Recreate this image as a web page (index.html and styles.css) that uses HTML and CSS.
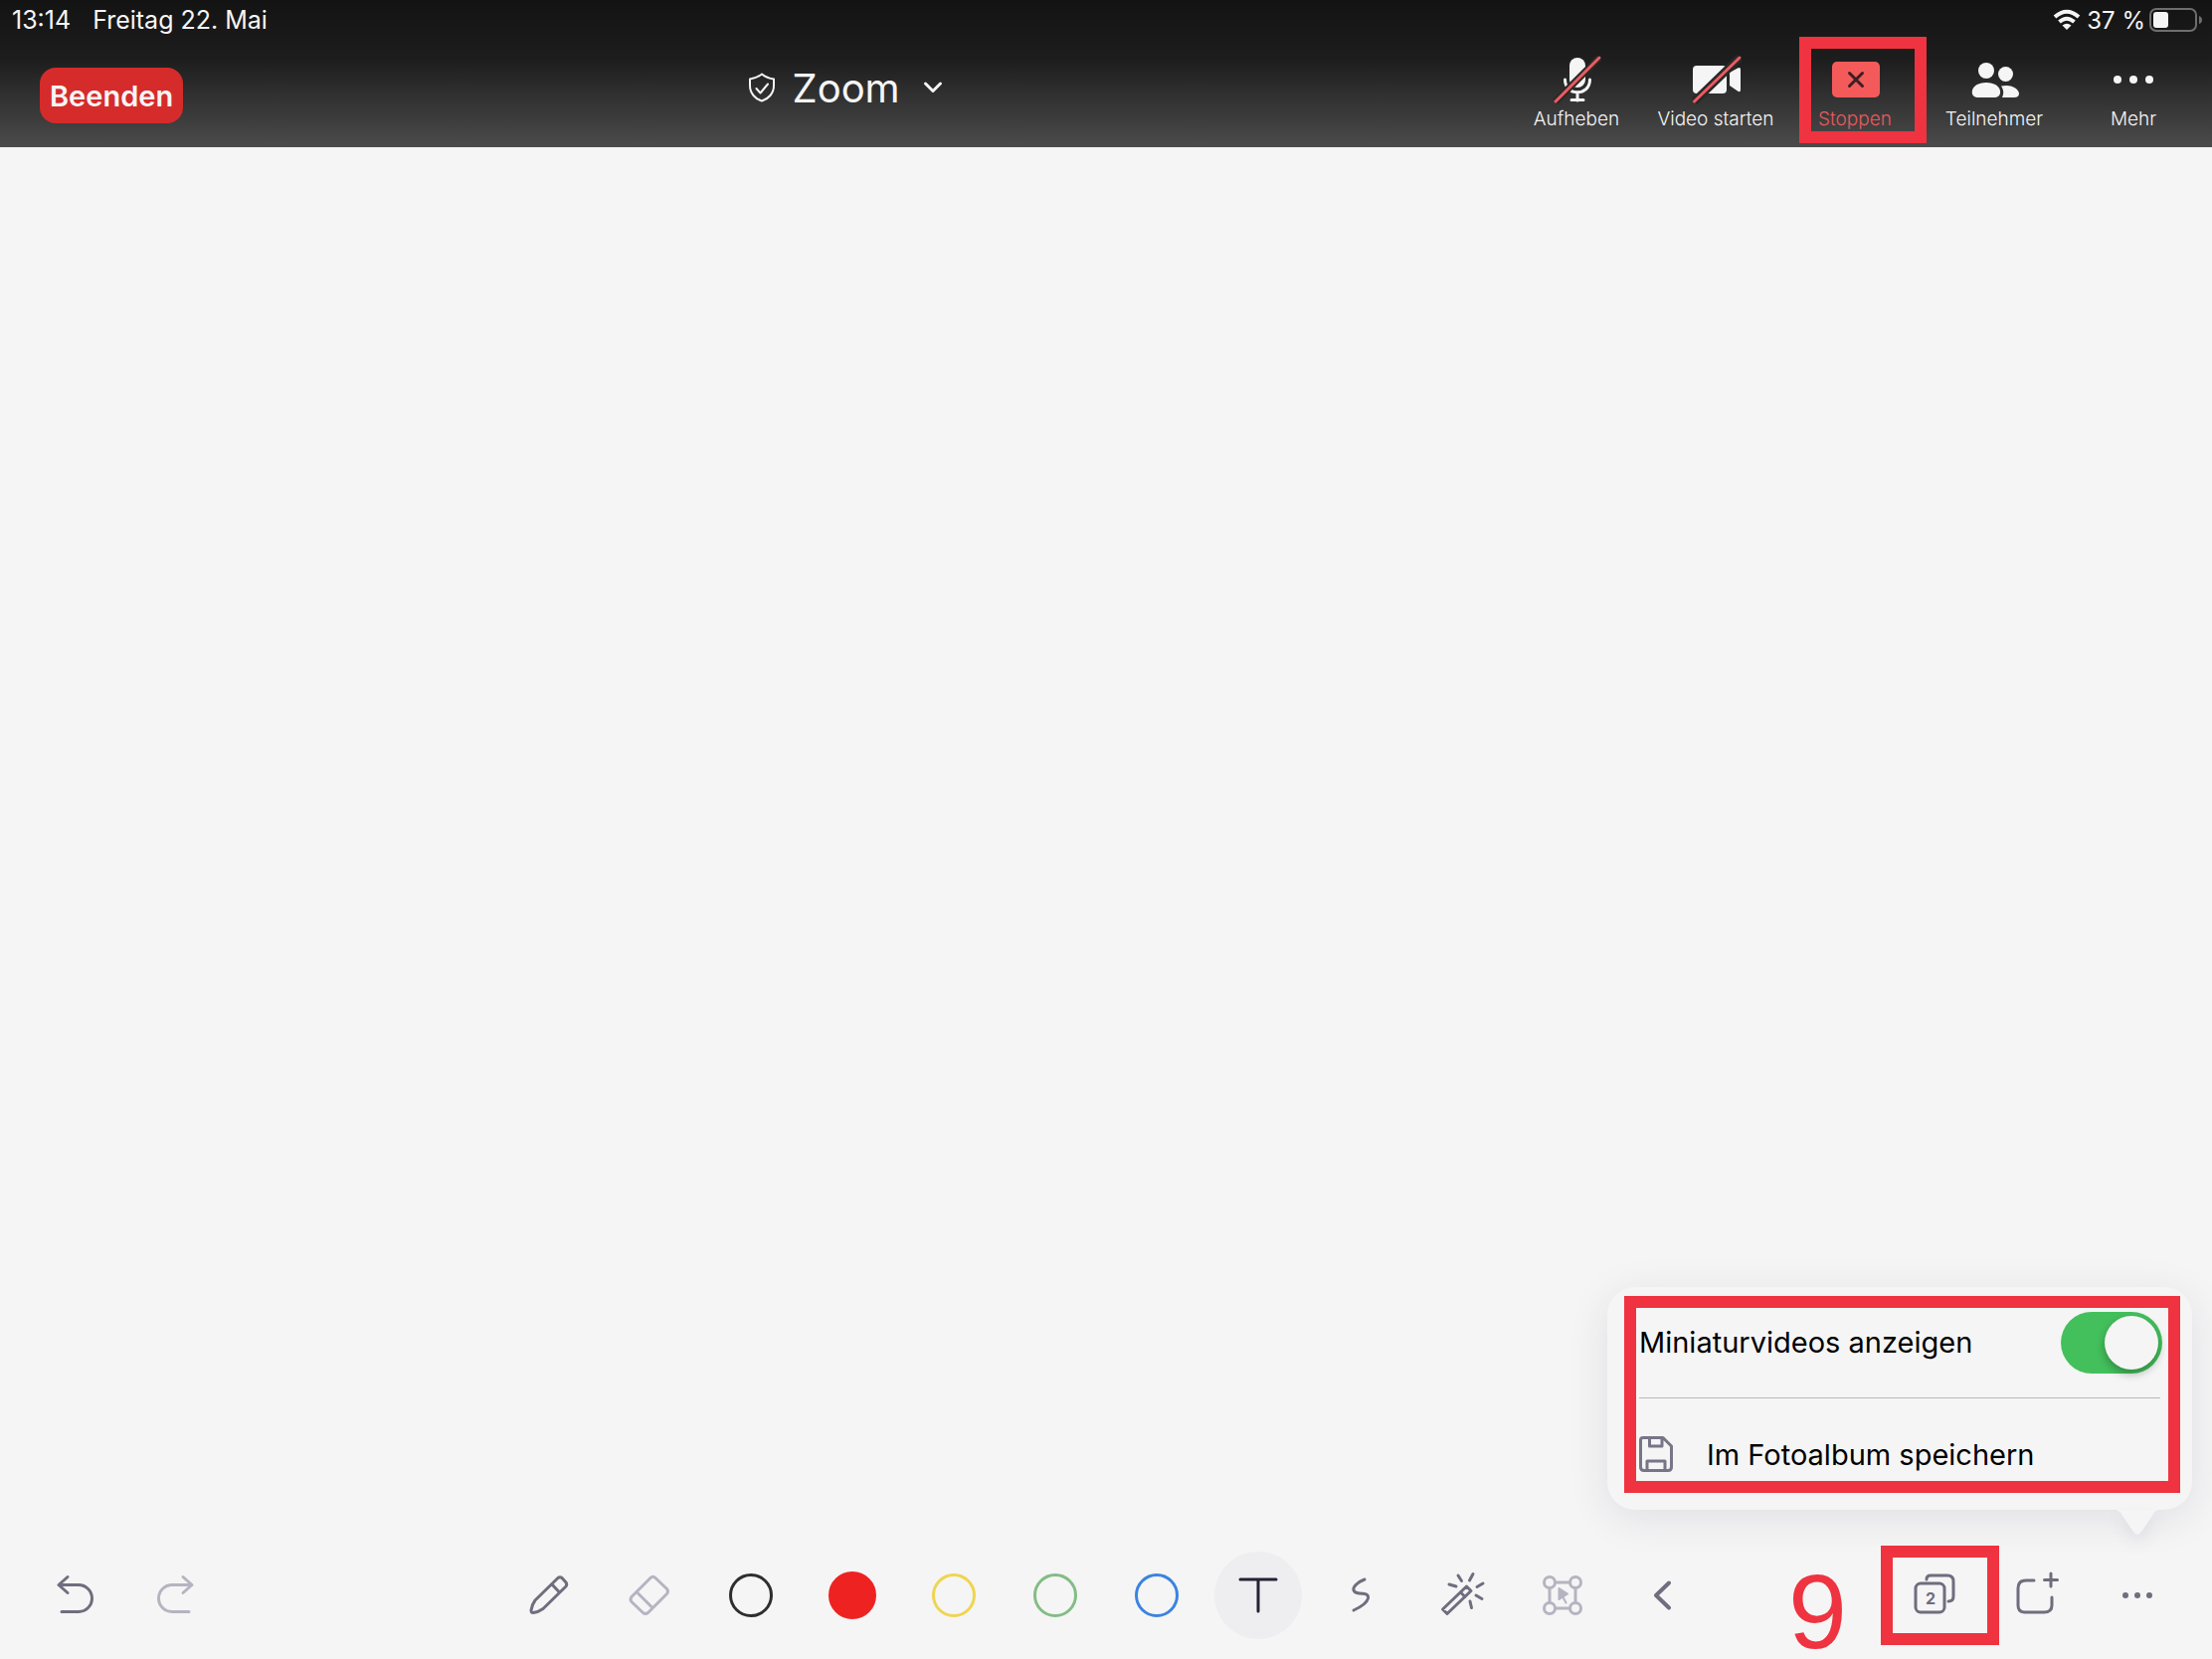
FILE: index.html
```html
<!DOCTYPE html>
<html lang="de">
<head>
<meta charset="utf-8">
<meta name="viewport" content="width=device-width, initial-scale=1">
<title>Zoom – Whiteboard</title>
<link rel="stylesheet" href="styles.css">
</head>
<body>
<div class="page">
  <header class="top">
    <div class="status">
      <div class="status-group"><time>13:14</time><span>Freitag 22. Mai</span></div>
      <div class="status-right">
        <svg class="wifi" viewBox="0 0 28 22" aria-hidden="true"><g fill="none" stroke="#f5f5f5" stroke-width="4"><path d="M2 8Q14-2.500 26 8"/><path d="M6.500 13Q14 6.500 21.500 13"/></g><path d="M9.500 16.500Q14 13 18.500 16.500L14 21Z" fill="#f5f5f5"/></svg>
        <span>37 %</span>
        <svg class="battery" viewBox="0 0 54 24" aria-hidden="true"><rect x="1" y="1" width="46" height="22" rx="6" fill="none" stroke="#6e6e6e" stroke-width="2"/><rect x="4" y="4" width="15" height="16" rx="3" fill="#f5f5f5"/><path d="M50 8q3 1 3 4t-3 4z" fill="#6e6e6e"/></svg>
      </div>
    </div>
    <div class="meeting">
      <button class="end" type="button">Beenden</button>
      <button class="title" type="button">
        <svg class="shield" viewBox="0 0 28 30" aria-hidden="true"><path d="M14 1.500Q19 5.500 26 6.500V13C26 21 20.500 26.500 14 28.500C7.500 26.500 2 21 2 13V6.500Q9 5.500 14 1.500Z"/><path d="M8.500 16l4 4.500 7.500-9"/></svg>
        <span>Zoom</span>
        <svg class="chevron" viewBox="0 0 18 12" aria-hidden="true"><path d="M1.500 2L9 9.500 16.500 2"/></svg>
      </button>
      <nav class="controls">
        <button type="button" class="control">
          <svg viewBox="0 0 48 48" aria-hidden="true"><rect x="17" y="2" width="16" height="30" rx="8" fill="#f5f5f5"/><path d="M12.500 24C12.500 41 37.500 41 37.500 24M25 37v8M19 44.500H31" fill="none" stroke="#f5f5f5" stroke-width="3" stroke-linecap="round"/><path d="M3 46L47 2" stroke="#292929" stroke-width="7"/><path d="M3 46L47 2" stroke="#f05a5e" stroke-width="3" stroke-linecap="round"/></svg>
          <span>Aufheben</span>
        </button>
        <button type="button" class="control">
          <svg viewBox="0 0 48 48" aria-hidden="true"><rect x="1" y="10" width="34" height="28" rx="4" fill="#f5f5f5"/><path d="M38 17L46 12.500Q49 11 49 14V34Q49 37.500 46 35.500L38 30Z" fill="#f5f5f5"/><path d="M2.500 46L48 2" stroke="#292929" stroke-width="8"/><path d="M2.500 46L48 2" stroke="#f05a5e" stroke-width="3" stroke-linecap="round"/></svg>
          <span>Video starten</span>
        </button>
        <button type="button" class="control control-stop">
          <svg viewBox="0 0 48 48" aria-hidden="true"><rect x="1" y="6" width="48" height="36" rx="5" fill="#f55a5a"/><path d="M18.500 17.500l13 13m0-13l-13 13" stroke="#3a2024" stroke-width="3" stroke-linecap="round"/></svg>
          <span>Stoppen</span>
        </button>
        <button type="button" class="control">
          <svg viewBox="0 0 48 48" aria-hidden="true"><g fill="#f5f5f5"><circle cx="16" cy="15" r="8"/><circle cx="35.500" cy="18.500" r="7.500"/><path d="M7 42C-1 42-1 27 16 27S33 42 25 42ZM31 30.500C42 28 49 34 49 38Q49 42 44 42H32Q35 36 31 30.500Z"/></g></svg>
          <span>Teilnehmer</span>
        </button>
        <button type="button" class="control">
          <svg viewBox="0 0 48 48" aria-hidden="true"><g fill="#f5f5f5"><circle cx="8" cy="24" r="4"/><circle cx="24" cy="24" r="4"/><circle cx="40" cy="24" r="4"/></g></svg>
          <span>Mehr</span>
        </button>
      </nav>
    </div>
  </header>

  <main class="canvas" aria-label="Whiteboard"></main>

  <footer class="toolbar">
    <div class="tools">
      <button type="button" class="tool" aria-label="Rückgängig"><svg viewBox="0 0 48 48"><path d="M17 5.500L8 13.500 17 21.500M8 13.500H28a13.500 13.500 0 0 1 0 27H11"/></svg></button>
      <button type="button" class="tool faded" aria-label="Wiederholen"><svg viewBox="0 0 48 48"><path d="M31 5.500L40 13.500 31 21.500M40 13.500H20a13.500 13.500 0 0 0 0 27H37"/></svg></button>
    </div>
    <div class="tools">
      <button type="button" class="tool" aria-label="Stift"><svg viewBox="0 0 48 48"><path d="M34 6.500Q36 5 38 6.500L42 11Q43.500 13 42 15L19 37.500Q14 41 9 41.500Q7 41.500 7 39Q8 33 11 29ZM28 13l7.500 8"/></svg></button>
      <button type="button" class="tool faded" aria-label="Radierer"><svg viewBox="0 0 48 48"><path d="M25 6.500Q27.500 4 30 6.500L41.500 17.500Q43.500 20 41.500 22.500L22.500 41.500Q20 43.500 17.500 41.500L6 30.500Q4 28 6 25.500ZM11.500 21L27 36.500"/></svg></button>
      <button type="button" class="tool" aria-label="Schwarz"><span class="ink ink-black"></span></button>
      <button type="button" class="tool" aria-label="Rot"><span class="ink ink-red"></span></button>
      <button type="button" class="tool" aria-label="Gelb"><span class="ink ink-yellow"></span></button>
      <button type="button" class="tool" aria-label="Grün"><span class="ink ink-green"></span></button>
      <button type="button" class="tool" aria-label="Blau"><span class="ink ink-blue"></span></button>
      <button type="button" class="tool selected" aria-label="Text" aria-pressed="true"><svg viewBox="0 0 48 48"><path d="M6 8H42M24 8V40"/></svg></button>
      <button type="button" class="tool" aria-label="Freihand"><svg viewBox="0 0 48 48"><path d="M29 8C21 11 17 16 18 19S24 22 29 22.500Q33 23 32.500 27Q31 33 18 39"/></svg></button>
      <button type="button" class="tool" aria-label="Zauberstab"><svg viewBox="0 0 48 48"><path d="M29.500 15L34 19.500 10 42.500 5.500 38ZM23.500 21l4.500 4.500M12 13l7 2M21 4l3.500 5.500M36 2.500l-3.500 6.500M46 12l-6 3.500M39 24l6 3.500M33 30l1.500 6.500"/></svg></button>
      <button type="button" class="tool faded" aria-label="Auswahl"><svg viewBox="0 0 48 48"><circle cx="11" cy="11" r="5.500"/><circle cx="37" cy="11" r="5.500"/><circle cx="11" cy="37" r="5.500"/><circle cx="37" cy="37" r="5.500"/><path d="M17 11H31M17 37H31M11 17V31M37 17V31"/><path d="M20.500 17L29 22.500 20.500 28ZM24 25l3.500 6.500" fill="currentColor" stroke-width="2"/></svg></button>
      <button type="button" class="tool" aria-label="Zurück"><svg viewBox="0 0 48 48"><path d="M29 11.500L16 24 29 36.500" stroke-width="4"/></svg></button>
    </div>
    <div class="tools tools-end">
      <button type="button" class="tool tool-pages" aria-label="Seiten">
        <svg viewBox="0 0 48 48"><rect x="5" y="12" width="29" height="29" rx="5"/><path d="M16 8Q16 4 20 4H37Q43 4 43 10V25Q43 30 38 30"/></svg>
        <span class="page-count">2</span>
        <span class="step">9</span>
      </button>
      <button type="button" class="tool" aria-label="Neue Seite"><svg viewBox="0 0 48 48"><path d="M22 9H14Q6 9 6 17V34Q6 41 13 41H32Q40 41 40 34V26M39 2V15M32.500 8.500H45.500"/></svg></button>
      <button type="button" class="tool" aria-label="Mehr"><svg viewBox="0 0 48 48"><g class="dots"><circle cx="12" cy="24" r="3"/><circle cx="24" cy="24" r="3"/><circle cx="36" cy="24" r="3"/></g></svg></button>
    </div>
  </footer>

  <section class="popover" aria-label="Weitere Optionen">
    <div class="option">
      <label for="thumbs">Miniaturvideos anzeigen</label>
      <input id="thumbs" class="switch" type="checkbox" role="switch" checked>
    </div>
    <button class="option option-save" type="button">
      <svg viewBox="0 0 34 36" aria-hidden="true"><path d="M4 1.500H24L32.500 10V31Q32.500 34.500 29 34.500H5Q1.500 34.500 1.500 31V4Q1.500 1.500 4 1.500ZM10.500 2V10H23V2M8 34V25H26V34"/></svg>
      <span>Im Fotoalbum speichern</span>
    </button>
    <svg class="tip" viewBox="0 0 42 26" aria-hidden="true"><path d="M0 0Q4 2 6 6L17 22Q21 28 25 22L36 6Q38 1 42 0Z" fill="#f5f5f5"/></svg>
  </section>
</div>
</body>
</html>
```
FILE: styles.css
```css
*, *::before, *::after { box-sizing: border-box; }

body {
  margin: 0;
  background: #f5f5f5;
  color: #000;
  font-family: Inter, "Liberation Sans", sans-serif;
}

button {
  padding: 0;
  border: 0;
  background: none;
  color: inherit;
  font: inherit;
}

svg { display: block; overflow: visible; }

.page {
  position: relative;
  display: flex;
  flex-direction: column;
  min-height: 100vh;
}

/* Header */
.top {
  background: linear-gradient(#131313, #1d1d1d 40%, #4b4b4b);
  color: #f5f5f5;
}

.status {
  display: flex;
  justify-content: space-between;
  align-items: center;
  height: 40px;
  padding: 0 9px 0 12px;
  font-size: 24px;
}

.status-group { display: flex; gap: 22px; font-size: 25px; }
.status-right { display: flex; align-items: center; gap: 4px; }
.wifi { width: 28px; height: 22px; margin-right: 2px; }
.battery { width: 54px; height: 24px; }

.meeting {
  display: flex;
  justify-content: space-between;
  align-items: flex-start;
  height: 108px;
  padding: 0 9px 0 40px;
}

.end {
  height: 56px;
  margin-top: 28px;
  padding: 0 10px;
  border-radius: 16px;
  background: #d62b2b;
  font-size: 29px;
  font-weight: 600;
}

.title {
  display: flex;
  align-items: center;
  height: 96px;
  font-size: 40px;
}

.title svg { fill: none; stroke: #f5f5f5; stroke-linecap: round; stroke-linejoin: round; }
.shield { width: 28px; height: 30px; margin-right: 16px; stroke-width: 2; }
.chevron { width: 18px; height: 12px; margin-left: 24px; stroke-width: 3; }

.controls { display: flex; }

.control {
  position: relative;
  display: flex;
  flex-direction: column;
  align-items: center;
  gap: 4px;
  width: 140px;
  padding-top: 16px;
  font-size: 19px;
  font-weight: 300;
  line-height: 24px;
  white-space: nowrap;
}

.control svg { width: 48px; height: 48px; }
.control-stop { color: #e85a5e; }

.control-stop::after {
  content: "";
  position: absolute;
  top: -3px;
  left: 14px;
  width: 128px;
  height: 107px;
  border: 12px solid #ef3340;
}

.canvas { flex: 1; }

/* Drawing toolbar */
.toolbar {
  display: grid;
  grid-template-columns: 1fr auto 1fr;
  height: 128px;
  padding: 0 24px;
  color: #6f6d7e;
}

.tools { display: flex; }
.tools-end { justify-content: flex-end; }

.tool {
  position: relative;
  display: flex;
  align-items: center;
  justify-content: center;
  width: 102px;
}

.tool svg {
  width: 48px;
  height: 48px;
  fill: none;
  stroke: currentColor;
  stroke-width: 3;
  stroke-linecap: round;
  stroke-linejoin: round;
}

.tool .dots { fill: currentColor; stroke: none; }
.faded { color: #b5b4c1; }

.ink {
  width: 44px;
  height: 44px;
  border: 3px solid;
  border-radius: 50%;
}

.ink-black { color: #2e2e2e; }
.ink-red { width: 48px; height: 48px; color: #ef2222; background: #ef2222; }
.ink-yellow { color: #efd550; }
.ink-green { color: #83bd85; }
.ink-blue { color: #3b84df; }

.selected { color: #252234; }

.selected::before {
  content: "";
  position: absolute;
  width: 88px;
  height: 88px;
  border-radius: 50%;
  background: #eeeef1;
}

.selected svg { position: relative; }

.page-count {
  position: absolute;
  top: 57px;
  left: 37px;
  width: 20px;
  font-size: 16px;
  font-weight: 700;
  line-height: 20px;
  text-align: center;
}

.tool-pages::after {
  content: "";
  position: absolute;
  top: 14px;
  left: -3px;
  width: 119px;
  height: 100px;
  border: 12px solid #ef3340;
}

.step {
  position: absolute;
  top: 32px;
  right: 139px;
  color: #ef3340;
  font-family: "Liberation Sans", Arial, sans-serif;
  font-size: 106px;
  line-height: 96px;
}

/* Popover above the "more" button */
.popover {
  position: absolute;
  right: 20px;
  bottom: 150px;
  width: 588px;
  padding: 0 32px;
  border-radius: 28px;
  background: #f5f5f5;
  box-shadow: 0 8px 40px rgba(40, 40, 90, 0.1);
  font-size: 29px;
}

.popover::after {
  content: "";
  position: absolute;
  inset: 9px 12px 17px 17px;
  border: 12px solid #ef3340;
  pointer-events: none;
}

.option {
  display: flex;
  align-items: center;
  justify-content: space-between;
  width: 100%;
  height: 112px;
}

.option:first-child { border-bottom: 1px solid #b9b9bd; }

.option-save { justify-content: flex-start; gap: 34px; }

.option-save svg {
  width: 34px;
  height: 36px;
  fill: none;
  stroke: #777587;
  stroke-width: 3;
  stroke-linejoin: round;
}

.switch {
  appearance: none;
  flex: none;
  width: 102px;
  height: 62px;
  margin: 0 -2px 0 0;
  padding: 4px;
  border-radius: 31px;
  background: #43c05c;
}

.switch::before {
  content: "";
  display: block;
  width: 54px;
  height: 54px;
  margin-left: 40px;
  border-radius: 50%;
  background: #f5f5f5;
  box-shadow: 0 4px 10px rgba(0, 0, 0, 0.3);
}

.tip {
  position: absolute;
  top: 100%;
  right: 34px;
  width: 42px;
  height: 26px;
  filter: drop-shadow(0 8px 8px rgba(40, 40, 90, 0.08));
}
```
